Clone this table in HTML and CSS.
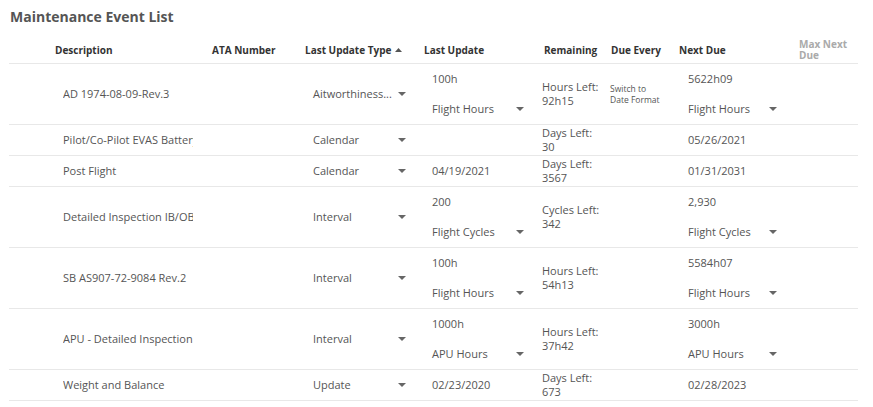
FILE: index.html
```html
<!DOCTYPE html>
<html>
<head>
<meta charset="utf-8">
<link rel="stylesheet" href="styles.css">
</head>
<body>
<div class="page">
  <h1 class="title">Maintenance Event List</h1>
  <div class="table">
    <div class="row head">
      <div class="hc h-desc">Description</div>
      <div class="hc h-ata">ATA Number</div>
      <div class="hc h-type">Last Update Type <svg class="sort" width="7" height="4" viewBox="0 0 7 4"><polygon points="0,4 7,4 3.5,0"/></svg></div>
      <div class="hc h-last">Last Update</div>
      <div class="hc h-rem">Remaining</div>
      <div class="hc h-every">Due Every</div>
      <div class="hc h-next">Next Due</div>
      <div class="hc h-max">Max Next<br>Due</div>
    </div>

    <div class="row tall">
      <div class="c c-desc"><span class="clip">AD 1974-08-09-Rev.3</span></div>
      <div class="c c-ata"></div>
      <div class="c c-type"><div class="sel sel-type"><span>Aitworthiness...</span><svg class="caret" width="8" height="4" viewBox="0 0 8 4"><polygon points="0,0 8,0 4,4"/></svg></div></div>
      <div class="c c-last stack"><span class="val">100h</span><div class="sel sel-last"><span>Flight Hours</span><svg class="caret" width="8" height="4" viewBox="0 0 8 4"><polygon points="0,0 8,0 4,4"/></svg></div></div>
      <div class="c c-rem"><span class="rem">Hours Left:<br>92h15</span></div>
      <div class="c c-every"><span class="switch">Switch to<br>Date Format</span></div>
      <div class="c c-next stack"><span class="val">5622h09</span><div class="sel sel-next"><span>Flight Hours</span><svg class="caret" width="8" height="4" viewBox="0 0 8 4"><polygon points="0,0 8,0 4,4"/></svg></div></div>
      <div class="c c-max"></div>
    </div>

    <div class="row">
      <div class="c c-desc"><span class="clip">Pilot/Co-Pilot EVAS Battery Replacement</span></div>
      <div class="c c-ata"></div>
      <div class="c c-type"><div class="sel sel-type"><span>Calendar</span><svg class="caret" width="8" height="4" viewBox="0 0 8 4"><polygon points="0,0 8,0 4,4"/></svg></div></div>
      <div class="c c-last"></div>
      <div class="c c-rem"><span class="rem">Days Left:<br>30</span></div>
      <div class="c c-every"></div>
      <div class="c c-next"><span class="val">05/26/2021</span></div>
      <div class="c c-max"></div>
    </div>

    <div class="row">
      <div class="c c-desc"><span class="clip">Post Flight</span></div>
      <div class="c c-ata"></div>
      <div class="c c-type"><div class="sel sel-type"><span>Calendar</span><svg class="caret" width="8" height="4" viewBox="0 0 8 4"><polygon points="0,0 8,0 4,4"/></svg></div></div>
      <div class="c c-last"><span class="val">04/19/2021</span></div>
      <div class="c c-rem"><span class="rem">Days Left:<br>3567</span></div>
      <div class="c c-every"></div>
      <div class="c c-next"><span class="val">01/31/2031</span></div>
      <div class="c c-max"></div>
    </div>

    <div class="row tall">
      <div class="c c-desc"><span class="clip">Detailed Inspection IB/OB Flap</span></div>
      <div class="c c-ata"></div>
      <div class="c c-type"><div class="sel sel-type"><span>Interval</span><svg class="caret" width="8" height="4" viewBox="0 0 8 4"><polygon points="0,0 8,0 4,4"/></svg></div></div>
      <div class="c c-last stack"><span class="val">200</span><div class="sel sel-last"><span>Flight Cycles</span><svg class="caret" width="8" height="4" viewBox="0 0 8 4"><polygon points="0,0 8,0 4,4"/></svg></div></div>
      <div class="c c-rem"><span class="rem">Cycles Left:<br>342</span></div>
      <div class="c c-every"></div>
      <div class="c c-next stack"><span class="val">2,930</span><div class="sel sel-next"><span>Flight Cycles</span><svg class="caret" width="8" height="4" viewBox="0 0 8 4"><polygon points="0,0 8,0 4,4"/></svg></div></div>
      <div class="c c-max"></div>
    </div>

    <div class="row tall">
      <div class="c c-desc"><span class="clip">SB AS907-72-9084 Rev.2</span></div>
      <div class="c c-ata"></div>
      <div class="c c-type"><div class="sel sel-type"><span>Interval</span><svg class="caret" width="8" height="4" viewBox="0 0 8 4"><polygon points="0,0 8,0 4,4"/></svg></div></div>
      <div class="c c-last stack"><span class="val">100h</span><div class="sel sel-last"><span>Flight Hours</span><svg class="caret" width="8" height="4" viewBox="0 0 8 4"><polygon points="0,0 8,0 4,4"/></svg></div></div>
      <div class="c c-rem"><span class="rem">Hours Left:<br>54h13</span></div>
      <div class="c c-every"></div>
      <div class="c c-next stack"><span class="val">5584h07</span><div class="sel sel-next"><span>Flight Hours</span><svg class="caret" width="8" height="4" viewBox="0 0 8 4"><polygon points="0,0 8,0 4,4"/></svg></div></div>
      <div class="c c-max"></div>
    </div>

    <div class="row tall">
      <div class="c c-desc"><span class="clip">APU - Detailed Inspection</span></div>
      <div class="c c-ata"></div>
      <div class="c c-type"><div class="sel sel-type"><span>Interval</span><svg class="caret" width="8" height="4" viewBox="0 0 8 4"><polygon points="0,0 8,0 4,4"/></svg></div></div>
      <div class="c c-last stack"><span class="val">1000h</span><div class="sel sel-last"><span>APU Hours</span><svg class="caret" width="8" height="4" viewBox="0 0 8 4"><polygon points="0,0 8,0 4,4"/></svg></div></div>
      <div class="c c-rem"><span class="rem">Hours Left:<br>37h42</span></div>
      <div class="c c-every"></div>
      <div class="c c-next stack"><span class="val">3000h</span><div class="sel sel-next"><span>APU Hours</span><svg class="caret" width="8" height="4" viewBox="0 0 8 4"><polygon points="0,0 8,0 4,4"/></svg></div></div>
      <div class="c c-max"></div>
    </div>

    <div class="row">
      <div class="c c-desc"><span class="clip">Weight and Balance</span></div>
      <div class="c c-ata"></div>
      <div class="c c-type"><div class="sel sel-type"><span>Update</span><svg class="caret" width="8" height="4" viewBox="0 0 8 4"><polygon points="0,0 8,0 4,4"/></svg></div></div>
      <div class="c c-last"><span class="val">02/23/2020</span></div>
      <div class="c c-rem"><span class="rem">Days Left:<br>673</span></div>
      <div class="c c-every"></div>
      <div class="c c-next"><span class="val">02/28/2023</span></div>
      <div class="c c-max"></div>
    </div>
  </div>
</div>
</body>
</html>
```

FILE: styles.css
```css
* { box-sizing: border-box; }
html, body { margin: 0; padding: 0; background: #fff; }
body {
  font-family: "Open Sans", "Noto Sans", sans-serif;
  font-size: 11px;
  color: #555;
}
.page {
  padding: 0 0 0 9px;
  width: 858px;
}
.title {
  margin: 0;
  padding: 7px 0 0 1px;
  height: 36px;
  font-size: 14px;
  line-height: 20px;
  font-weight: 700;
  color: #555;
}
.table { width: 849px; }
.row {
  display: grid;
  grid-template-columns: 191px 100px 120px 115px 70px 67px 118px 68px;
  height: 31px;
  border-bottom: 1px solid #e8e8e8;
}
.row.tall { height: 61px; }
.row.head { height: 28px; }
.hc {
  display: flex;
  align-items: center;
  font-size: 10px;
  line-height: 10px;
  font-weight: 700;
  color: #333;
  white-space: nowrap;
}
.h-desc { padding-left: 46px; }
.h-ata { padding-left: 12px; }
.h-type { padding-left: 5px; }
.h-last { padding-left: 4px; }
.h-rem { padding-left: 9px; }
.h-every { padding-left: 6px; }
.h-next { padding-left: 7px; }
.h-max { padding-left: 9px; color: #aaa; line-height: 11px; }
.sort { margin-left: 4px; fill: #555; }

.c {
  display: flex;
  align-items: center;
  line-height: 14px;
  min-width: 0;
}
.c.stack {
  flex-direction: column;
  align-items: flex-start;
  justify-content: center;
  gap: 16px;
}
.c-desc { padding-left: 54px; }
.clip {
  display: block;
  width: 130px;
  overflow: hidden;
  white-space: nowrap;
}
.c-type { padding-left: 13px; }
.c-last { padding-left: 12px; }
.c-rem { padding-left: 7px; }
.c-every { padding-left: 5px; }
.c-next { padding-left: 16px; }
.sel {
  display: flex;
  align-items: center;
  justify-content: space-between;
  white-space: nowrap;
}
.sel-type { width: 93px; }
.sel-last { width: 92px; }
.sel-next { width: 89px; }
.caret { fill: #666; flex: none; }
.switch {
  font-size: 8.5px;
  line-height: 11px;
}
```
